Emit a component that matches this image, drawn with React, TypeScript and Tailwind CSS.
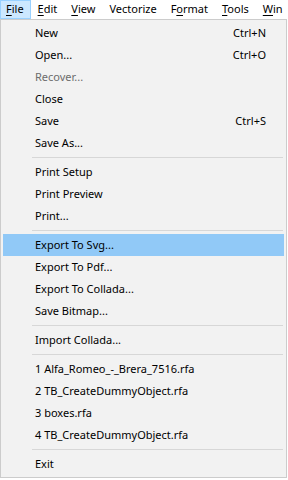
type Item = { label: string; shortcut?: string; disabled?: boolean; active?: boolean } | 'sep'

const items: Item[] = [
  { label: 'New', shortcut: 'Ctrl+N' },
  { label: 'Open...', shortcut: 'Ctrl+O' },
  { label: 'Recover...', disabled: true },
  { label: 'Close' },
  { label: 'Save', shortcut: 'Ctrl+S' },
  { label: 'Save As...' },
  'sep',
  { label: 'Print Setup' },
  { label: 'Print Preview' },
  { label: 'Print...' },
  'sep',
  { label: 'Export To Svg...', active: true },
  { label: 'Export To Pdf...' },
  { label: 'Export To Collada...' },
  { label: 'Save Bitmap...' },
  'sep',
  { label: 'Import Collada...' },
  'sep',
  { label: '1 Alfa_Romeo_-_Brera_7516.rfa' },
  { label: '2 TB_CreateDummyObject.rfa' },
  { label: '3 boxes.rfa' },
  { label: '4 TB_CreateDummyObject.rfa' },
  'sep',
  { label: 'Exit' },
]

export default function App() {
  return (
    <div className="w-[288px] h-[480px] bg-white overflow-hidden text-[11px] text-black" style={{ fontFamily: '"Noto Sans", "Segoe UI", sans-serif' }}>
      {/* Menu bar */}
      <div className="flex h-[19px] items-center whitespace-nowrap">
        <div className="h-[19px] pl-[5px] pr-[6px] flex items-center bg-[#cce8ff] border border-[#99d1ff]">
          <span><span className="underline underline-offset-2">F</span>ile</span>
        </div>
        <div className="h-[19px] px-[7px] flex items-center">
          <span><span className="underline underline-offset-2">E</span>dit</span>
        </div>
        <div className="h-[19px] px-[7px] flex items-center">
          <span><span className="underline underline-offset-2">V</span>iew</span>
        </div>
        <div className="h-[19px] px-[7px] flex items-center">
          <span>Vectorize</span>
        </div>
        <div className="h-[19px] px-[7px] flex items-center">
          <span>F<span className="underline underline-offset-2">o</span>rmat</span>
        </div>
        <div className="h-[19px] px-[7px] flex items-center">
          <span><span className="underline underline-offset-2">T</span>ools</span>
        </div>
        <div className="h-[19px] px-[7px] flex items-center">
          <span><span className="underline underline-offset-2">W</span>in</span>
        </div>
      </div>

      {/* Dropdown */}
      <div className="w-[287px] h-[459px] bg-[#f2f2f2] border border-[#cccccc] pt-[2px] px-[2px] flex flex-col">
        {items.map((it, i) =>
          it === 'sep' ? (
            <div key={i} className="h-[7px] flex items-center pl-[29px] pr-[1px]">
              <div className="h-px w-full bg-[#d7d7d7]" />
            </div>
          ) : (
            <div
              key={i}
              className={
                'h-[22px] flex items-center pl-[32px] pr-[18px] whitespace-nowrap ' +
                (it.active ? 'bg-[#91c9f7] ' : '') +
                (it.disabled ? 'text-[#6d6d6d]' : 'text-black')
              }
            >
              <span className="flex-1">{it.label}</span>
              {it.shortcut && <span>{it.shortcut}</span>}
            </div>
          )
        )}
      </div>
    </div>
  )
}
